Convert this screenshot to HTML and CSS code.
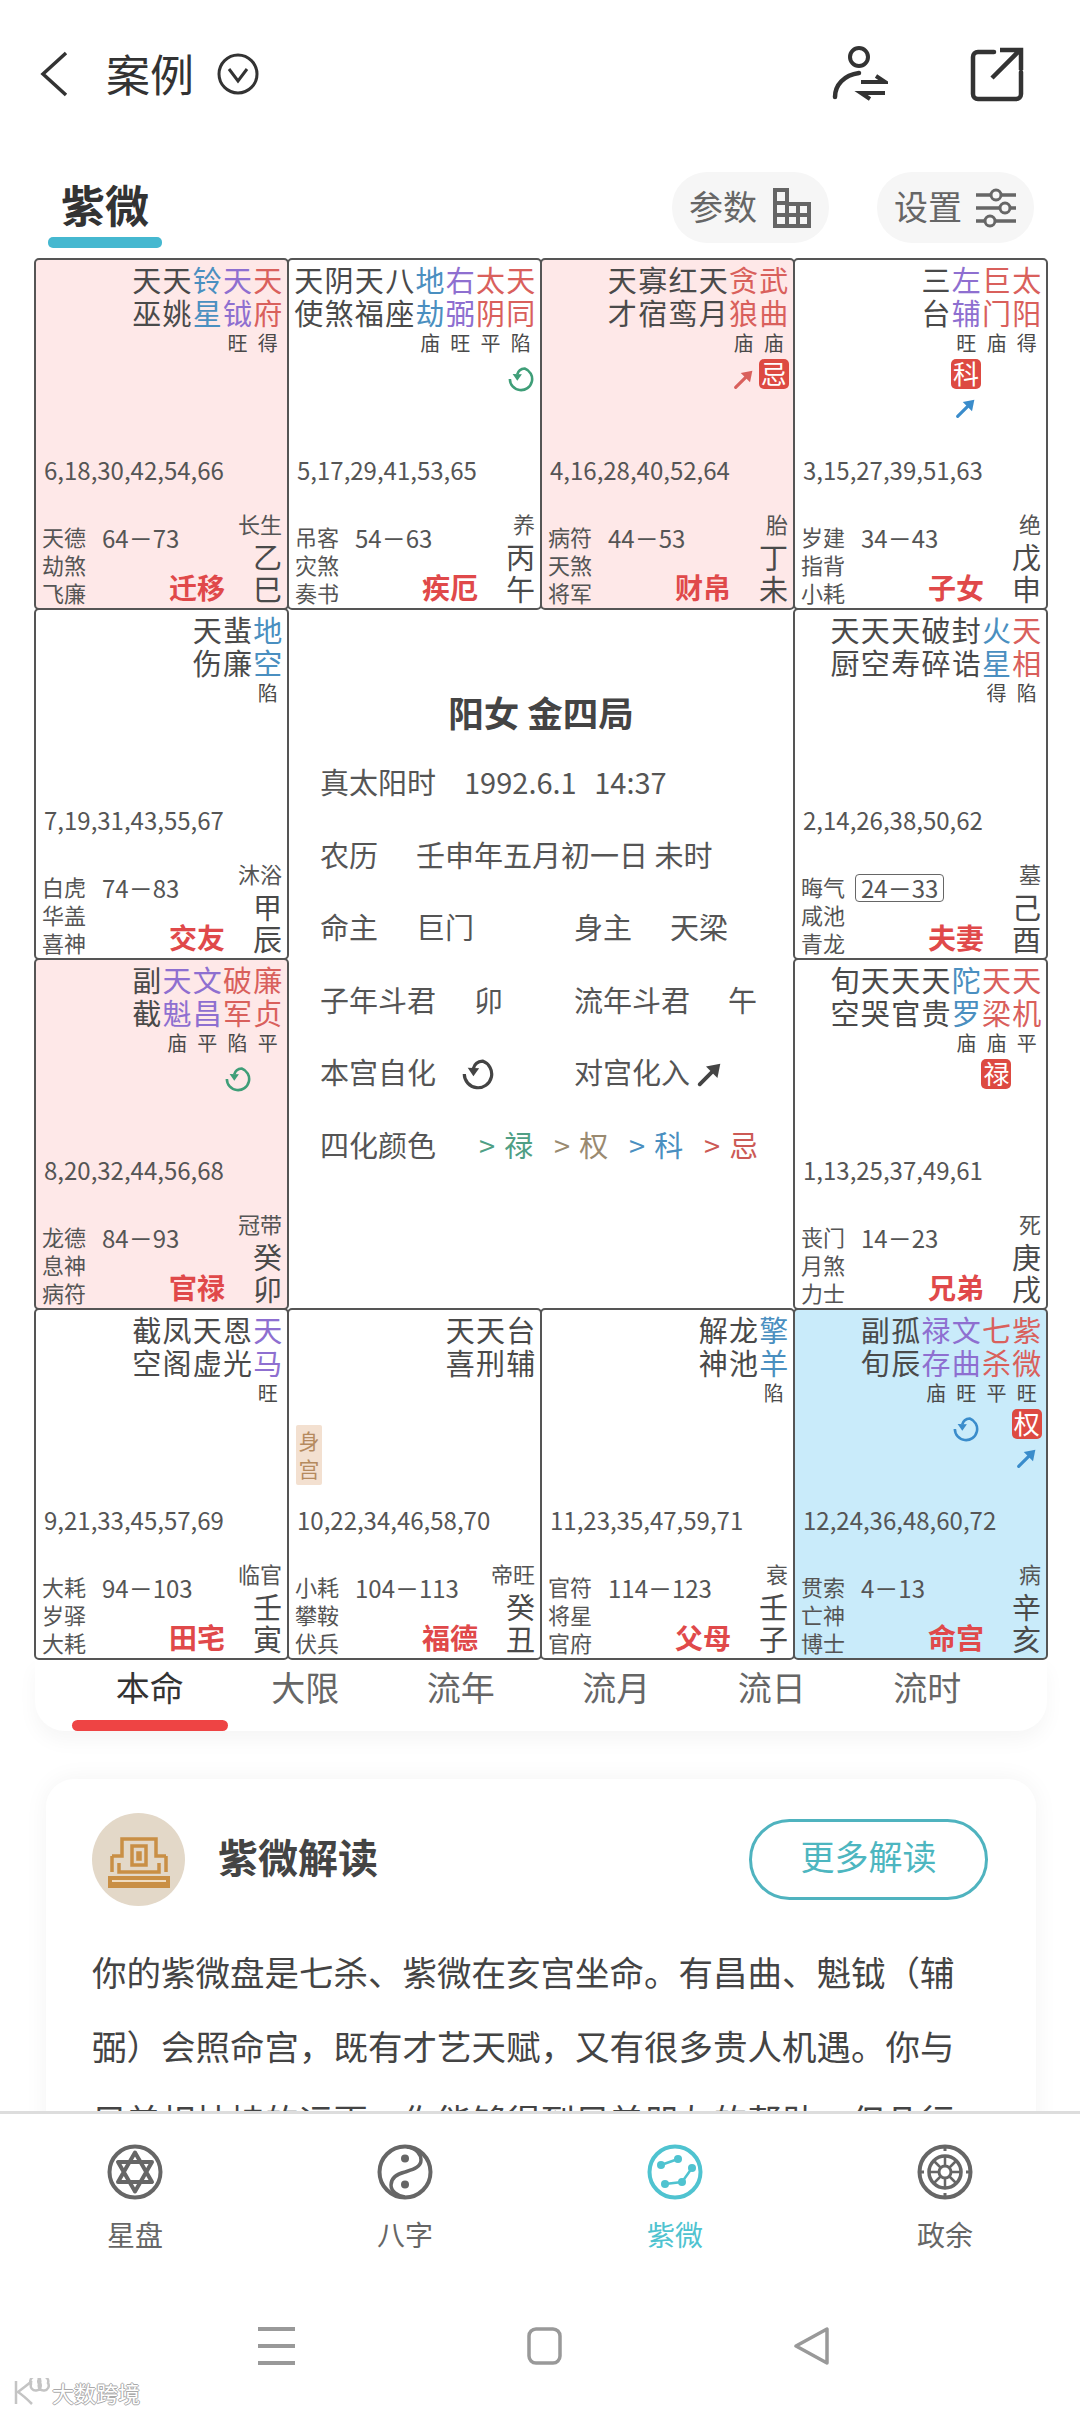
FILE: index.html
```html
<!DOCTYPE html>
<html lang="zh-CN">
<head>
    <meta charset="UTF-8">
    <meta name="viewport" content="width=device-width, initial-scale=1.0">
    <title>紫微</title>
    <link rel="stylesheet" href="styles.css">
</head>
<body>
<svg class="defs" width="0" height="0">
    <symbol id="zihua" viewBox="0 0 28 28">
        <path d="M2 14A12 12 0 1 0 18 2.700C14 3 11 5 10 9" fill="none" stroke="currentColor" stroke-width="2.800"/>
        <path d="M5 8.500L15 9L10 16Z" fill="currentColor"/>
    </symbol>
    <symbol id="arrow" viewBox="0 0 28 28">
        <path d="M5 23L18 10" fill="none" stroke="currentColor" stroke-width="3.400" stroke-linecap="round"/>
        <path d="M23 5L10.500 7.500L20.500 17.500Z" fill="currentColor"/>
    </symbol>
</svg>

<div class="page">
    <div class="content">
        <!-- Top bar -->
        <header class="topbar">
            <svg class="back" width="30" height="46" viewBox="0 0 30 46"><path d="M27 2L4 23L27 44" fill="none" stroke="#333" stroke-width="3.500"/></svg>
            <span class="page-title">案例</span>
            <svg class="drop" width="42" height="42" viewBox="0 0 42 42"><circle cx="21" cy="21" r="19" fill="none" stroke="#333" stroke-width="3"/><path d="M12 16L21 28L30 16" fill="none" stroke="#333" stroke-width="3"/></svg>
            <svg class="person" width="56" height="58" viewBox="0 0 56 58">
                <circle cx="27" cy="12" r="9" fill="none" stroke="#333" stroke-width="4"/>
                <path d="M3 52C3 40 12 30 27 28" fill="none" stroke="#333" stroke-width="4.500" stroke-linecap="round"/>
                <path d="M29 37H53L44 31M53 48H29L38 54" fill="none" stroke="#333" stroke-width="4"/>
            </svg>
            <svg class="share" width="56" height="56" viewBox="0 0 56 56">
                <path d="M24 6H8A5 5 0 0 0 3 11V48A5 5 0 0 0 8 53H46A5 5 0 0 0 51 48V26" fill="none" stroke="#333" stroke-width="4.500" stroke-linecap="round"/>
                <path d="M22 32L50 4M30 4H51V24" fill="none" stroke="#333" stroke-width="4.500"/>
            </svg>
        </header>

        <!-- Title row -->
        <div class="title-row">
            <div class="main-tab">紫微</div>
            <div class="pill">
                <span class="pill-text">参数</span>
                <svg width="40" height="42" viewBox="0 0 40 42"><path d="M3 3H15V17H37V39H3ZM3 16H15V39M26 17V39M3 28H37" fill="none" stroke="#666" stroke-width="4"/></svg>
            </div>
            <div class="pill">
                <span class="pill-text">设置</span>
                <svg width="42" height="40" viewBox="0 0 42 40">
                    <path d="M1 7H41M1 20H41M1 33H41" stroke="#666" stroke-width="3.500"/>
                    <circle cx="21" cy="7" r="5" fill="#f6f6f6" stroke="#666" stroke-width="3"/>
                    <circle cx="30" cy="20" r="5" fill="#f6f6f6" stroke="#666" stroke-width="3"/>
                    <circle cx="15" cy="33" r="5" fill="#f6f6f6" stroke="#666" stroke-width="3"/>
                </svg>
            </div>
        </div>

        <!-- Chart -->
        <div class="chart">
            <!-- 巳 -->
            <div class="cell pink">
                <div class="stars">
                    <div class="star">天巫</div>
                    <div class="star">天姚</div>
                    <div class="star blue">铃星</div>
                    <div class="star purple">天钺<i>旺</i></div>
                    <div class="star red">天府<i>得</i></div>
                </div>
                <div class="ages">6,18,30,42,54,66</div>
                <div class="bottom">
                    <div class="shens">天德<br>劫煞<br>飞廉</div>
                    <div class="mid"><span class="decade">64－73</span><span class="palace">迁移</span></div>
                    <div class="gz"><span class="phase">长生</span><span>乙</span><span>巳</span></div>
                </div>
            </div>
            <!-- 午 -->
            <div class="cell">
                <div class="stars">
                    <div class="star">天使</div>
                    <div class="star">阴煞</div>
                    <div class="star">天福</div>
                    <div class="star">八座</div>
                    <div class="star blue">地劫<i>庙</i></div>
                    <div class="star purple">右弼<i>旺</i></div>
                    <div class="star red">太阴<i>平</i></div>
                    <div class="star red">天同<i>陷</i><svg class="mark green"><use href="#zihua"/></svg></div>
                </div>
                <div class="ages">5,17,29,41,53,65</div>
                <div class="bottom">
                    <div class="shens">吊客<br>灾煞<br>奏书</div>
                    <div class="mid"><span class="decade">54－63</span><span class="palace">疾厄</span></div>
                    <div class="gz"><span class="phase">养</span><span>丙</span><span>午</span></div>
                </div>
            </div>
            <!-- 未 -->
            <div class="cell pink">
                <div class="stars">
                    <div class="star">天才</div>
                    <div class="star">寡宿</div>
                    <div class="star">红鸾</div>
                    <div class="star">天月</div>
                    <div class="star red">贪狼<i>庙</i><svg class="mark"><use href="#arrow"/></svg></div>
                    <div class="star red">武曲<i>庙</i><b class="badge">忌</b></div>
                </div>
                <div class="ages">4,16,28,40,52,64</div>
                <div class="bottom">
                    <div class="shens">病符<br>天煞<br>将军</div>
                    <div class="mid"><span class="decade">44－53</span><span class="palace">财帛</span></div>
                    <div class="gz"><span class="phase">胎</span><span>丁</span><span>未</span></div>
                </div>
            </div>
            <!-- 申 -->
            <div class="cell">
                <div class="stars">
                    <div class="star">三台</div>
                    <div class="star purple">左辅<i>旺</i><b class="badge">科</b><svg class="mark sky"><use href="#arrow"/></svg></div>
                    <div class="star red">巨门<i>庙</i></div>
                    <div class="star red">太阳<i>得</i></div>
                </div>
                <div class="ages">3,15,27,39,51,63</div>
                <div class="bottom">
                    <div class="shens">岁建<br>指背<br>小耗</div>
                    <div class="mid"><span class="decade">34－43</span><span class="palace">子女</span></div>
                    <div class="gz"><span class="phase">绝</span><span>戊</span><span>申</span></div>
                </div>
            </div>
            <!-- 辰 -->
            <div class="cell">
                <div class="stars">
                    <div class="star">天伤</div>
                    <div class="star">蜚廉</div>
                    <div class="star blue">地空<i>陷</i></div>
                </div>
                <div class="ages">7,19,31,43,55,67</div>
                <div class="bottom">
                    <div class="shens">白虎<br>华盖<br>喜神</div>
                    <div class="mid"><span class="decade">74－83</span><span class="palace">交友</span></div>
                    <div class="gz"><span class="phase">沐浴</span><span>甲</span><span>辰</span></div>
                </div>
            </div>

            <!-- Centre panel -->
            <div class="center">
                <h2 class="center-title">阳女 金四局</h2>
                <div class="info-row"><span class="label time-label">真太阳时</span><span class="time">1992.6.1 14:37</span></div>
                <div class="info-row"><span class="label">农历</span>壬申年五月初一日 未时</div>
                <div class="info-row">
                    <div class="half"><span class="label">命主</span>巨门</div>
                    <div class="half"><span class="label">身主</span>天梁</div>
                </div>
                <div class="info-row">
                    <div class="half"><span class="label">子年斗君</span>卯</div>
                    <div class="half"><span class="label">流年斗君</span>午</div>
                </div>
                <div class="info-row">
                    <div class="half"><span class="label self-label">本宫自化</span><svg class="legend-icon"><use href="#zihua"/></svg></div>
                    <div class="half"><span class="label opp-label">对宫化入</span><svg class="legend-icon"><use href="#arrow"/></svg></div>
                </div>
                <div class="info-row">
                    <span class="label colors-label">四化颜色</span>
                    <span class="hua hua-lu"><em>&gt;</em>禄</span>
                    <span class="hua hua-quan"><em>&gt;</em>权</span>
                    <span class="hua hua-ke"><em>&gt;</em>科</span>
                    <span class="hua hua-ji"><em>&gt;</em>忌</span>
                </div>
            </div>

            <!-- 酉 -->
            <div class="cell">
                <div class="stars">
                    <div class="star">天厨</div>
                    <div class="star">天空</div>
                    <div class="star">天寿</div>
                    <div class="star">破碎</div>
                    <div class="star">封诰</div>
                    <div class="star blue">火星<i>得</i></div>
                    <div class="star red">天相<i>陷</i></div>
                </div>
                <div class="ages">2,14,26,38,50,62</div>
                <div class="bottom">
                    <div class="shens">晦气<br>咸池<br>青龙</div>
                    <div class="mid"><span class="decade boxed">24－33</span><span class="palace">夫妻</span></div>
                    <div class="gz"><span class="phase">墓</span><span>己</span><span>酉</span></div>
                </div>
            </div>
            <!-- 卯 -->
            <div class="cell pink">
                <div class="stars">
                    <div class="star">副截</div>
                    <div class="star purple">天魁<i>庙</i></div>
                    <div class="star purple">文昌<i>平</i></div>
                    <div class="star red">破军<i>陷</i><svg class="mark green"><use href="#zihua"/></svg></div>
                    <div class="star red">廉贞<i>平</i></div>
                </div>
                <div class="ages">8,20,32,44,56,68</div>
                <div class="bottom">
                    <div class="shens">龙德<br>息神<br>病符</div>
                    <div class="mid"><span class="decade">84－93</span><span class="palace">官禄</span></div>
                    <div class="gz"><span class="phase">冠带</span><span>癸</span><span>卯</span></div>
                </div>
            </div>
            <!-- 戌 -->
            <div class="cell">
                <div class="stars">
                    <div class="star">旬空</div>
                    <div class="star">天哭</div>
                    <div class="star">天官</div>
                    <div class="star">天贵</div>
                    <div class="star blue">陀罗<i>庙</i></div>
                    <div class="star red">天梁<i>庙</i><b class="badge">禄</b></div>
                    <div class="star red">天机<i>平</i></div>
                </div>
                <div class="ages">1,13,25,37,49,61</div>
                <div class="bottom">
                    <div class="shens">丧门<br>月煞<br>力士</div>
                    <div class="mid"><span class="decade">14－23</span><span class="palace">兄弟</span></div>
                    <div class="gz"><span class="phase">死</span><span>庚</span><span>戌</span></div>
                </div>
            </div>
            <!-- 寅 -->
            <div class="cell">
                <div class="stars">
                    <div class="star">截空</div>
                    <div class="star">凤阁</div>
                    <div class="star">天虚</div>
                    <div class="star">恩光</div>
                    <div class="star purple">天马<i>旺</i></div>
                </div>
                <div class="ages">9,21,33,45,57,69</div>
                <div class="bottom">
                    <div class="shens">大耗<br>岁驿<br>大耗</div>
                    <div class="mid"><span class="decade">94－103</span><span class="palace">田宅</span></div>
                    <div class="gz"><span class="phase">临官</span><span>壬</span><span>寅</span></div>
                </div>
            </div>
            <!-- 丑 -->
            <div class="cell">
                <div class="stars">
                    <div class="star">天喜</div>
                    <div class="star">天刑</div>
                    <div class="star">台辅</div>
                </div>
                <div class="body-palace">身宫</div>
                <div class="ages">10,22,34,46,58,70</div>
                <div class="bottom">
                    <div class="shens">小耗<br>攀鞍<br>伏兵</div>
                    <div class="mid"><span class="decade">104－113</span><span class="palace">福德</span></div>
                    <div class="gz"><span class="phase">帝旺</span><span>癸</span><span>丑</span></div>
                </div>
            </div>
            <!-- 子 -->
            <div class="cell">
                <div class="stars">
                    <div class="star">解神</div>
                    <div class="star">龙池</div>
                    <div class="star blue">擎羊<i>陷</i></div>
                </div>
                <div class="ages">11,23,35,47,59,71</div>
                <div class="bottom">
                    <div class="shens">官符<br>将星<br>官府</div>
                    <div class="mid"><span class="decade">114－123</span><span class="palace">父母</span></div>
                    <div class="gz"><span class="phase">衰</span><span>壬</span><span>子</span></div>
                </div>
            </div>
            <!-- 亥 -->
            <div class="cell sky-bg">
                <div class="stars">
                    <div class="star">副旬</div>
                    <div class="star">孤辰</div>
                    <div class="star purple">禄存<i>庙</i></div>
                    <div class="star purple">文曲<i>旺</i><svg class="mark sky"><use href="#zihua"/></svg></div>
                    <div class="star red">七杀<i>平</i></div>
                    <div class="star red">紫微<i>旺</i><b class="badge">权</b><svg class="mark sky"><use href="#arrow"/></svg></div>
                </div>
                <div class="ages">12,24,36,48,60,72</div>
                <div class="bottom">
                    <div class="shens">贯索<br>亡神<br>博士</div>
                    <div class="mid"><span class="decade">4－13</span><span class="palace">命宫</span></div>
                    <div class="gz"><span class="phase">病</span><span>辛</span><span>亥</span></div>
                </div>
            </div>
        </div>

        <!-- Period tabs -->
        <div class="periods">
            <div class="period active">本命</div>
            <div class="period">大限</div>
            <div class="period">流年</div>
            <div class="period">流月</div>
            <div class="period">流日</div>
            <div class="period">流时</div>
        </div>

        <!-- Reading card -->
        <div class="card">
            <div class="card-head">
                <div class="avatar">
                    <svg width="62" height="56" viewBox="0 0 62 56">
                        <path d="M4 24H14V7H48V24H58M4 24V40M58 24V40M11 31V40H51V31M24 14H38V33H24ZM30 21H32V27H30Z" fill="none" stroke="#c98f45" stroke-width="3.500"/>
                        <rect x="0" y="44" width="62" height="12" fill="#c98f45"/>
                        <rect x="4" y="48" width="54" height="2" fill="#f0dcc0"/>
                    </svg>
                </div>
                <div class="card-title">紫微解读</div>
                <div class="more-btn">更多解读</div>
            </div>
            <p class="card-text">你的紫微盘是七杀、紫微在亥宫坐命。有昌曲、魁钺（辅弼）会照命宫，既有才艺天赋，又有很多贵人机遇。你与兄弟相扶持的运更，你能够得到兄弟朋友的帮助，但凡行</p>
        </div>
    </div>

    <!-- Bottom nav -->
    <nav class="nav">
        <div class="nav-items">
            <div class="nav-item">
                <svg width="56" height="56" viewBox="0 0 56 56">
                    <circle cx="28" cy="28" r="25.500" fill="none" stroke="#666" stroke-width="4"/>
                    <path d="M28 8.500L45 38H11ZM28 47.500L11 18H45Z" fill="none" stroke="#666" stroke-width="4" stroke-linejoin="round"/>
                </svg>
                <span>星盘</span>
            </div>
            <div class="nav-item">
                <svg width="56" height="56" viewBox="0 0 56 56">
                    <circle cx="28" cy="28" r="25.500" fill="none" stroke="#666" stroke-width="4"/>
                    <path d="M30 3C40 4 44 11 44 16C44 24 34 26 28 28C20 30 14 34 14 41C14 47 20 52 28 53" fill="none" stroke="#666" stroke-width="3.500"/>
                    <circle cx="28" cy="14.500" r="4" fill="#666"/>
                    <circle cx="28" cy="40.500" r="4" fill="#666"/>
                </svg>
                <span>八字</span>
            </div>
            <div class="nav-item active">
                <svg width="56" height="56" viewBox="0 0 56 56">
                    <circle cx="28" cy="28" r="25.500" fill="none" stroke="#4fc3d0" stroke-width="4"/>
                    <path d="M31 15L14 21M45 24L35 38L18 40" fill="none" stroke="#4fc3d0" stroke-width="2.500"/>
                    <circle cx="31" cy="15" r="4" fill="#4fc3d0"/>
                    <circle cx="14" cy="21" r="4" fill="#4fc3d0"/>
                    <circle cx="45" cy="24" r="4" fill="#4fc3d0"/>
                    <circle cx="35" cy="38" r="4" fill="#4fc3d0"/>
                    <circle cx="18" cy="40" r="4" fill="#4fc3d0"/>
                </svg>
                <span>紫微</span>
            </div>
            <div class="nav-item">
                <svg width="56" height="56" viewBox="0 0 56 56">
                    <circle cx="28" cy="28" r="25.500" fill="none" stroke="#666" stroke-width="4"/>
                    <path d="M28 2V7M28 49V54M2 28H7M49 28H54" stroke="#666" stroke-width="3"/>
                    <circle cx="28" cy="28" r="16" fill="none" stroke="#666" stroke-width="3.500"/>
                    <circle cx="28" cy="28" r="6" fill="none" stroke="#666" stroke-width="3"/>
                    <path d="M28 12V22M28 34V44M12 28H22M34 28H44M17 17L24 24M32 32L39 39M39 17L32 24M24 32L17 39" stroke="#666" stroke-width="2.500"/>
                </svg>
                <span>政余</span>
            </div>
        </div>
        <div class="sys-bar">
            <svg width="37" height="38" viewBox="0 0 37 38"><path d="M0 2H37M0 19H37M0 36H37" stroke="#999" stroke-width="4"/></svg>
            <svg width="35" height="38" viewBox="0 0 35 38"><rect x="2" y="2" width="31" height="34" rx="7" fill="none" stroke="#999" stroke-width="3.500"/></svg>
            <svg width="35" height="38" viewBox="0 0 35 38"><path d="M33 2V36L2 19Z" fill="none" stroke="#999" stroke-width="3.500" stroke-linejoin="round"/></svg>
        </div>
    </nav>

    <!-- Watermark -->
    <div class="watermark">
        <svg width="38" height="28" viewBox="0 0 38 28"><path d="M4 3V26M20 3C14 8 10 11 6 14C12 18 16 22 20 26M19 6A5 5 0 1 0 28 5A5 5 0 1 0 19 6ZM27 6A5 5 0 1 0 36 5A5 5 0 1 0 27 6Z" fill="none" stroke="#c4c4c4" stroke-width="2.500"/></svg>
        <span>大数跨境</span>
    </div>
</div>
</body>
</html>
```

FILE: styles.css
```css
/* General */
* {
    box-sizing: border-box;
}

body {
    margin: 0;
    padding: 0;
    background-color: #fff;
    color: #444;
    font-family: "Noto Sans CJK SC", "Noto Sans", sans-serif;
}

.defs {
    position: absolute;
}

.page {
    position: relative;
    width: 1080px;
    height: 2412px;
    display: flex;
    flex-direction: column;
    overflow: hidden;
}

.content {
    flex: 1;
    min-height: 0;
    overflow: hidden;
}

/* Top bar */
.topbar {
    height: 148px;
    display: flex;
    align-items: center;
    padding: 0 54px 0 39px;
}

.page-title {
    margin: -3px 0 0 37px;
    font-size: 44px;
    color: #333;
}

.drop {
    margin-left: 23px;
}

.person {
    margin-left: auto;
}

.share {
    margin-left: 82px;
}

/* Title row */
.title-row {
    height: 111px;
    display: flex;
    align-items: flex-start;
    padding: 24px 46px 0 48px;
}

.main-tab {
    width: 114px;
    margin-right: auto;
    text-align: center;
    font-size: 44px;
    font-weight: 700;
    line-height: 64px;
    color: #333;
}

.main-tab::after {
    content: "";
    display: block;
    height: 11px;
    margin-top: 1px;
    border-radius: 5px;
    background-color: #45b8d0;
}

.pill {
    width: 157px;
    height: 71px;
    margin-left: 48px;
    display: flex;
    align-items: center;
    justify-content: space-between;
    padding: 0 17px;
    border-radius: 35px;
    background-color: #f6f6f6;
    font-size: 34px;
    color: #666;
}

.pill-text {
    margin-top: -5px;
}

/* Chart grid */
.chart {
    width: 1012px;
    margin-left: 35px;
    display: grid;
    grid-template-columns: repeat(4, 253px);
    grid-template-rows: repeat(4, 350px);
}

.cell {
    position: relative;
    margin: -1px;
    display: flex;
    flex-direction: column;
    border: 2px solid #555;
    border-radius: 5px;
    background-color: #fff;
}

.pink {
    background-color: #fee8e8;
}

.sky-bg {
    background-color: #c9ebfa;
}

.stars {
    height: 195px;
    display: flex;
    justify-content: flex-end;
    padding: 3px 4px 0 0;
}

.star {
    width: 30.300px;
    font-size: 29px;
    line-height: 33px;
    text-align: center;
    word-break: break-all;
    color: #4a4a4a;
}

.star i {
    display: block;
    margin-top: 3px;
    font-size: 20px;
    font-style: normal;
    line-height: 22px;
    color: #4a4a4a;
}

.blue {
    color: #4a8fc0;
}

.purple {
    color: #8e6fd0;
}

.red {
    color: #d9605c;
}

.badge {
    display: block;
    width: 30px;
    height: 30px;
    margin-top: 5px;
    border-radius: 5px;
    background-color: #dd4a42;
    color: #fff;
    font-size: 26px;
    font-weight: 400;
    line-height: 28px;
}

.mark {
    display: block;
    width: 26px;
    height: 26px;
    margin: 12px auto 0;
}

.badge + .mark {
    margin-top: 6px;
}

.green {
    color: #3f9e78;
}

.sky {
    color: #3a8ccb;
}

.ages {
    padding-left: 8px;
    font-size: 24px;
    line-height: 30px;
    color: #555;
}

.bottom {
    height: 96px;
    margin-top: auto;
    margin-bottom: 2px;
    display: flex;
    align-items: flex-end;
    padding: 0 5px 0 6px;
}

.shens {
    width: 44px;
    flex: none;
    font-size: 22px;
    line-height: 28px;
    color: #555;
}

.mid {
    flex: 1;
    height: 84px;
    margin-left: 16px;
    display: flex;
    flex-direction: column;
    justify-content: space-between;
    align-items: flex-start;
}

.decade {
    margin-top: 2px;
    font-size: 24px;
    line-height: 28px;
    color: #555;
    white-space: nowrap;
}

.boxed {
    margin-left: -6px;
    padding: 0 5px;
    border: 1px solid #666;
    border-radius: 4px;
    line-height: 26px;
}

.palace {
    margin: 0 0 2px 67px;
    font-size: 28px;
    font-weight: 700;
    line-height: 34px;
    color: #e0494a;
}

.gz {
    display: flex;
    flex-direction: column;
    align-items: flex-end;
    padding-bottom: 2px;
    font-size: 29px;
    line-height: 32px;
    color: #4a4a4a;
}

.phase {
    margin-bottom: 4px;
    font-size: 22px;
    line-height: 26px;
    color: #555;
}

/* Tag over the 丑 palace */
.body-palace {
    position: absolute;
    left: 7px;
    top: 115px;
    width: 26px;
    height: 60px;
    padding-top: 1px;
    border-radius: 2px;
    background-color: #f3e0d0;
    color: #b58a5e;
    font-size: 21px;
    line-height: 28px;
    text-align: center;
    word-break: break-all;
}

/* Centre panel */
.center {
    grid-column: 2 / 4;
    grid-row: 2 / 4;
    padding: 78px 0 0 32px;
    font-size: 29px;
    color: #555;
}

.center-title {
    margin: 0 0 8px -32px;
    text-align: center;
    font-size: 35.500px;
    font-weight: 700;
    line-height: 50px;
    color: #444;
}

.info-row {
    height: 72.500px;
    display: flex;
    align-items: center;
    white-space: nowrap;
}

.half {
    width: 254px;
    flex: none;
    display: flex;
    align-items: center;
}

.label {
    margin-right: 38px;
}

.time-label {
    margin-right: 28px;
}

.time {
    font-size: 29px;
    word-spacing: 11px;
}

.self-label {
    margin-right: 26px;
}

.opp-label {
    margin-right: 4px;
}

.legend-icon {
    width: 32px;
    height: 32px;
    margin-top: 6px;
    color: #444;
}

.colors-label {
    margin-right: 43px;
}

.hua {
    width: 75px;
    display: flex;
    gap: 9px;
}

.hua em {
    font-style: normal;
}

.hua-lu {
    color: #4f9f85;
}

.hua-quan {
    color: #9a8a70;
}

.hua-ke {
    color: #4a8fc0;
}

.hua-ji {
    color: #cc5a55;
}

/* Period tabs */
.periods {
    width: 1012px;
    height: 72px;
    margin-left: 35px;
    display: flex;
    padding-left: 37px;
    border-radius: 0 0 30px 30px;
    box-shadow: 0 10px 20px rgba(0, 0, 0, 0.04);
}

.period {
    width: 155.500px;
    font-size: 34px;
    line-height: 56px;
    text-align: center;
    color: #666;
}

.period.active {
    color: #333;
}

.period.active::after {
    content: "";
    display: block;
    height: 11px;
    margin-top: 5px;
    border-radius: 6px;
    background-color: #ee4444;
}

/* Reading card */
.card {
    width: 990px;
    margin: 48px 0 0 46px;
    padding: 34px 48px 0 46px;
    border-radius: 28px;
    box-shadow: 0 0 24px rgba(0, 0, 0, 0.05);
}

.card-head {
    display: flex;
    align-items: center;
}

.avatar {
    width: 93px;
    height: 93px;
    display: flex;
    align-items: center;
    justify-content: center;
    border-radius: 50%;
    background-color: #e3d8c8;
}

.card-title {
    margin: -8px 0 0 33px;
    font-size: 40px;
    font-weight: 700;
    color: #444;
}

.more-btn {
    width: 239px;
    height: 81px;
    margin-left: auto;
    border: 3px solid #4fb3bf;
    border-radius: 41px;
    color: #4db6c0;
    font-size: 34px;
    line-height: 68px;
    text-align: center;
}

.card-text {
    margin: 28px 0 0;
    font-size: 34.500px;
    line-height: 74px;
    color: #444;
}

/* Bottom nav */
.nav {
    height: 301px;
    flex: none;
    border-top: 3px solid #ddd;
    background-color: #fff;
}

.nav-items {
    display: grid;
    grid-template-columns: repeat(4, 270px);
    padding-top: 30px;
}

.nav-item {
    display: flex;
    flex-direction: column;
    align-items: center;
    gap: 14px;
    font-size: 28px;
    line-height: 40px;
    color: #666;
}

.nav-item.active {
    color: #4fc3d0;
}

.sys-bar {
    margin-top: 73px;
    display: flex;
    gap: 232px;
    padding-left: 258px;
}

/* Watermark */
.watermark {
    position: absolute;
    left: 12px;
    bottom: 6px;
    display: flex;
    align-items: center;
    gap: 2px;
    font-size: 22px;
    line-height: 28px;
    color: #fff;
    text-shadow: 1px 0 #aaa, -1px 0 #aaa, 0 1px #aaa, 0 -1px #aaa;
}
```
